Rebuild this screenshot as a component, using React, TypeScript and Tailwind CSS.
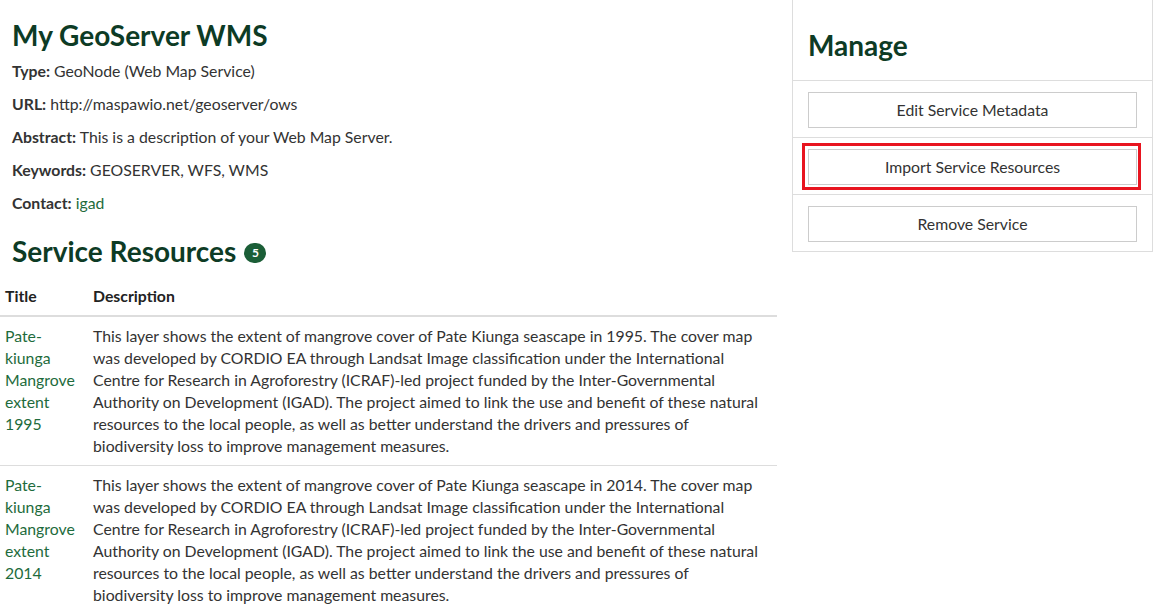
import React from 'react';

const desc = (year: string) =>
    `This layer shows the extent of mangrove cover of Pate Kiunga seascape in ${year}. The cover map was developed by CORDIO EA through Landsat Image classification under the International Centre for Research in Agroforestry (ICRAF)-led project funded by the Inter-Governmental Authority on Development (IGAD). The project aimed to link the use and benefit of these natural resources to the local people, as well as better understand the drivers and pressures of biodiversity loss to improve management measures.`;

const resources = [
    { title: 'Pate-kiunga Mangrove extent 1995', year: '1995' },
    { title: 'Pate-kiunga Mangrove extent 2014', year: '2014' },
];

const meta: [string, React.ReactNode][] = [
    ['Type:', 'GeoNode (Web Map Service)'],
    ['URL:', 'http://maspawio.net/geoserver/ows'],
    ['Abstract:', 'This is a description of your Web Map Server.'],
    ['Keywords:', 'GEOSERVER, WFS, WMS'],
    ['Contact:', <a className="text-[#1e6b3c]">igad</a>],
];

export default function App() {
    return (
        <div className="min-h-screen bg-white text-[#333] text-[15.8px] leading-[22px] overflow-hidden" style={{ fontFamily: 'Lato, "Open Sans", sans-serif' }}>
            <div className="flex items-start">
                <div className="w-[777px] shrink-0">
                    <h1 className="px-3 pt-[19px] mb-[9px] text-[28px] leading-[32px] font-bold text-[#0d3b25]">My GeoServer WMS</h1>
                    {meta.map(([k, v]) => (
                        <p key={k} className="px-3 mb-[11px]">
                            <strong className="font-bold">{k}</strong> {v}
                        </p>
                    ))}
                    <h2 className="px-3 pt-[10px] mb-[10px] text-[28px] leading-[32px] font-bold text-[#0d3b25] flex items-center">
                        Service Resources
                        <span className="ml-[8px] mt-[4px] inline-flex items-center justify-center w-[22px] h-[20px] rounded-full bg-[#1b5e37] text-white text-[12px] leading-none font-bold">5</span>
                    </h2>
                    <table className="w-full border-collapse">
                        <thead>
                            <tr className="border-b-2 border-[#ddd]">
                                <th className="text-left font-bold px-[5px] py-[8px] w-[88px] text-[#222]">Title</th>
                                <th className="text-left font-bold px-[5px] py-[8px] text-[#222]">Description</th>
                            </tr>
                        </thead>
                        <tbody>
                            {resources.map((r) => (
                                <tr key={r.year} className="border-b border-[#ddd] align-top">
                                    <td className="px-[5px] py-[8px] text-[#1e6b3c]">{r.title}</td>
                                    <td className="px-[5px] py-[8px]">{desc(r.year)}</td>
                                </tr>
                            ))}
                        </tbody>
                    </table>
                </div>
                <div className="ml-[15px] w-[361px] shrink-0 border border-t-0 border-[#ddd]">
                    <div className="h-[81px] px-[15px] flex items-center border-b border-[#ddd]">
                        <h3 className="pt-[10px] text-[28px] leading-[32px] font-bold text-[#0d3b25]">Manage</h3>
                    </div>
                    {['Edit Service Metadata', 'Import Service Resources', 'Remove Service'].map((label, i) => (
                        <div key={label} className={`px-[15px] pt-[11px] pb-[9px] ${i < 2 ? 'border-b border-[#ddd]' : ''}`}>
                            <div className="relative">
                                <button className="w-full h-[36px] border border-[#ccc] bg-white text-[#333] text-[15.8px]">{label}</button>
                                {i === 1 && (
                                    <span className="absolute left-[-6px] right-[-4px] top-[-6px] bottom-[-5px] border-[3px] border-[#e8141f] pointer-events-none" />
                                )}
                            </div>
                        </div>
                    ))}
                </div>
            </div>
        </div>
    );
}
